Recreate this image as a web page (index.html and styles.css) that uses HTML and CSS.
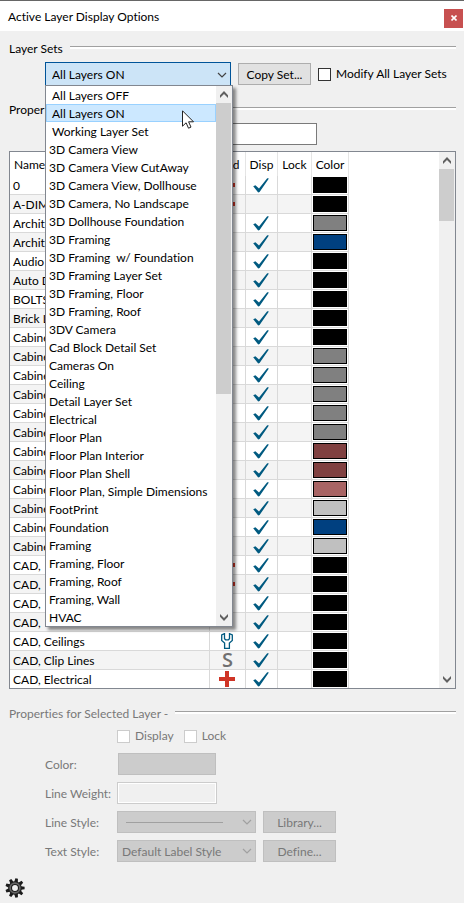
FILE: index.html
```html
<!DOCTYPE html>
<html lang="en">
<head>
<meta charset="utf-8">
<meta name="viewport" content="width=device-width, initial-scale=1">
<title>Active Layer Display Options</title>
<link rel="stylesheet" href="styles.css">
</head>
<body>
<svg class="sprite" aria-hidden="true">
  <symbol id="chevron" viewBox="0 0 10 6"><path d="M1 1l4 4 4-4" fill="none" stroke="currentColor" stroke-width="1.2"/></symbol>
  <symbol id="arrow-up" viewBox="0 0 8 7"><path d="M0 4.2L4 0l4 4.2V7L4 3 0 7z" fill="currentColor"/></symbol>
  <symbol id="arrow-down" viewBox="0 0 8 7"><path d="M0 2.8L4 7l4-4.200V0L4 4 0 0z" fill="currentColor"/></symbol>
  <symbol id="check" viewBox="0 0 16 15"><path d="M.2 8.300L2.400 7.200 6 10.400 14.200.2 15.900.6 6.600 14 5.200 14.600z" fill="#005a80"/></symbol>
  <symbol id="plus" viewBox="0 0 16 16"><path d="M6 0h4v6h6v4h-6v6H6v-6H0V6h6z" fill="#cf3426"/></symbol>
  <symbol id="wrench" viewBox="0 0 12 16"><path d="M3.500.7L.7 2v5.500L3.600 10v5.300h4.800V10l2.900-2.500V2L8.500.7v5L7.400 6.800H4.600L3.500 5.700z" fill="#fff" stroke="#005a80" stroke-width="1.300"/></symbol>
</svg>

<header class="titlebar">
  <h1>Active Layer Display Options</h1>
  <button class="close" type="button" aria-label="Close"><svg viewBox="0 0 6 6"><path d="M.5.5l5 5M5.500.5l-5 5" stroke="#fff" stroke-width="1.600"/></svg></button>
</header>

<main>
  <section>
    <h2 class="heading">Layer Sets</h2>
    <div class="set-row">
      <div class="combo">
        <select class="set-select" aria-label="Layer set"><option>All Layers ON</option></select>
        <svg class="chevron"><use href="#chevron"/></svg>
        <div class="popup">
          <ul role="listbox" aria-label="Layer sets" id="sets"></ul>
          <div class="scroll">
            <button type="button" aria-label="Scroll up"><svg><use href="#arrow-up"/></svg></button>
            <span class="thumb set-thumb"></span>
            <button type="button" aria-label="Scroll down"><svg><use href="#arrow-down"/></svg></button>
          </div>
          <svg class="pointer" viewBox="0 0 12 19"><path d="M.5.8v15.400l3.600-3.400 2.400 5.400 2.500-1.100-2.400-5.300h4.900z" fill="#fff" stroke="#222" /></svg>
        </div>
      </div>
      <button class="btn" type="button">Copy Set...</button>
      <label class="tick"><input type="checkbox">Modify All Layer Sets</label>
    </div>
  </section>

  <section>
    <h2 class="heading">Proper</h2>
    <input class="filter" type="text" aria-label="Filter layers">
    <div class="grid">
      <table>
        <colgroup><col class="c-name"><col class="c-used"><col class="c-disp"><col class="c-lock"><col class="c-color"><col></colgroup>
        <thead><tr><th class="name">Name</th><th class="used">Used</th><th>Disp</th><th>Lock</th><th>Color</th><th class="rest"></th></tr></thead>
        <tbody id="layers"></tbody>
      </table>
      <div class="scroll">
        <button type="button" aria-label="Scroll up"><svg><use href="#arrow-up"/></svg></button>
        <span class="thumb grid-thumb"></span>
        <button type="button" aria-label="Scroll down"><svg><use href="#arrow-down"/></svg></button>
      </div>
    </div>
  </section>

  <section class="selected">
    <h2 class="heading">Properties for Selected Layer -</h2>
    <div class="ticks">
      <label class="tick"><input type="checkbox" disabled>Display</label>
      <label class="tick"><input type="checkbox" disabled>Lock</label>
    </div>
    <div class="fields">
      <label for="color">Color:</label>
      <button class="btn color" id="color" type="button" disabled></button>
      <label for="weight">Line Weight:</label>
      <input class="weight" id="weight" type="text" disabled>
      <label for="line">Line Style:</label>
      <div class="combo">
        <select id="line" disabled></select>
        <span class="line-sample"></span>
        <svg class="chevron"><use href="#chevron"/></svg>
      </div>
      <button class="btn" type="button" disabled>Library...</button>
      <label for="text">Text Style:</label>
      <div class="combo">
        <select id="text" disabled><option>Default Label Style</option></select>
        <svg class="chevron"><use href="#chevron"/></svg>
      </div>
      <button class="btn" type="button" disabled>Define...</button>
    </div>
  </section>
</main>

<footer>
  <button class="gear" type="button" aria-label="Settings">
    <svg viewBox="-10 -10 20 20">
      <g fill="#1c1c1c" id="teeth"></g>
      <circle r="6.300" fill="#666" stroke="#1c1c1c" stroke-width="1.100"/>
      <circle r="3.500" fill="#f0f0f0" stroke="#1c1c1c" stroke-width="1.100"/>
    </svg>
  </button>
</footer>
<script src="script.js"></script>
</body>
</html>
```
FILE: styles.css
```css
* { box-sizing: border-box; }

body {
  margin: 0;
  min-height: 100vh;
  background: #f0f0f0;
  color: #000;
  font: 12px/18px Lato, "Open Sans", sans-serif;
  font-variant-ligatures: none;
}

h1, h2 { margin: 0; font: inherit; }
h1, h2 { font-variant-ligatures: none; }
button, input, select { font: inherit; font-variant-ligatures: none; color: inherit; border-radius: 0; }
ul { margin: 0; padding: 0; list-style: none; }
svg { display: block; }
.sprite { position: absolute; width: 0; height: 0; }

.titlebar {
  display: flex;
  align-items: center;
  justify-content: space-between;
  height: 31px;
  padding: 1px 1px 0 8px;
  border-top: 1px solid #666;
  background: #fff;
}

.close {
  display: grid;
  place-items: center;
  width: 19px;
  height: 19px;
  margin-top: 3px;
  padding: 0;
  border: 0;
  background: #c75050;
}
.close svg { width: 6px; height: 6px; }

main { padding: 9px 8px 0 9px; }

.heading { display: flex; gap: 7px; height: 18px; }
.heading::after {
  content: "";
  flex: 1;
  height: 2px;
  margin-top: 6px;
  border-top: 1px solid #a0a0a0;
  background: #fff;
}

.set-row {
  display: flex;
  align-items: center;
  gap: 7px;
  height: 24px;
  margin: 4px 0 15px 36px;
}

.combo { position: relative; }
.combo select {
  display: block;
  width: 100%;
  height: 22px;
  padding: 2px 20px 0 4px;
  border: 1px solid #bfbfbf;
  background: #ccc;
  appearance: none;
  opacity: 1;
}
.combo .set-select {
  width: 186px;
  height: 24px;
  padding-left: 6px;
  border-color: #005499;
  background: #cce4f7;
}
.chevron {
  position: absolute;
  top: 8px;
  right: 4px;
  width: 10px;
  height: 6px;
  color: #444;
}
.set-select + .chevron { top: 10px; }

.popup {
  position: absolute;
  z-index: 2;
  top: 23px;
  left: 0;
  display: flex;
  width: 188px;
  border: 1px solid #828790;
  background: #fff;
  box-shadow: 3px 3px 3px rgba(0, 0, 0, .45);
}
.popup ul { flex: 1; min-width: 0; }
.popup li { height: 18px; padding-left: 3px; line-height: 20px; white-space: pre; }
.popup .builtin { padding-left: 6px; }
.popup [aria-selected="true"] {
  padding-left: 5px;
  border: 1px solid #99d1ff;
  background: #cce8ff;
  line-height: 18px;
}
.pointer { position: absolute; top: 24px; left: 136px; width: 12px; height: 19px; }

.scroll {
  display: flex;
  flex-direction: column;
  flex-shrink: 0;
  width: 16px;
  padding-right: 1px;
  background: #f0f0f0;
}
.scroll button {
  display: grid;
  place-items: center;
  height: 17px;
  padding: 0;
  border: 0;
  background: none;
  color: #606060;
}
.scroll svg { width: 8px; height: 7px; }
.scroll button:last-child { margin-top: auto; }
.thumb { background: #cdcdcd; }
.set-thumb { height: 291px; }
.grid-thumb { height: 52px; }

.btn {
  width: 73px;
  height: 22px;
  padding: 2px 0 0;
  border: 1px solid #adadad;
  background: #e1e1e1;
}
.btn:disabled { border-color: #bfbfbf; background: #ccc; color: #787878; }

.tick { display: flex; align-items: center; gap: 5px; white-space: nowrap; }
.tick input {
  width: 13px;
  height: 13px;
  margin: 0;
  border: 1px solid #333;
  background: #fff;
  appearance: none;
}
.tick input:disabled { border-color: #ccc; }

.filter {
  display: block;
  width: 200px;
  height: 22px;
  margin: 4px 0 6px 108px;
  border: 1px solid #7a7a7a;
  background: #fff;
}

.grid { display: flex; border: 1px solid #828790; background: #fff; }
table { flex: 1; min-width: 0; table-layout: fixed; border-collapse: separate; border-spacing: 0; }
.c-name { width: 200px; }
.c-used { width: 36px; }
.c-disp { width: 32px; }
.c-lock { width: 34px; }
.c-color { width: 37px; }
th, td {
  height: 19px;
  padding: 0;
  border-right: 1px solid #d9d9d9;
  border-bottom: 1px solid #d9d9d9;
  font-weight: normal;
  line-height: 18px;
  white-space: nowrap;
}
th { height: 24px; padding-top: 2px; border-bottom: 0; border-right-color: #e5e5e5; text-align: center; }
th.name { padding-left: 4px; text-align: left; }
th.used { padding-right: 3px; }
td.name { padding: 2px 0 0 3px; line-height: 16px; text-align: left; }
tbody tr:nth-child(even) td { background: #f4f4f4; }
tbody tr:last-child td { height: 18px; border-bottom: 0; }
tbody tr td.swatch { padding: 1px; background: #fff; }
tbody tr td.rest, th.rest { border: 0; background: #fff; }
.swatch span { display: block; height: 16px; border: 1px solid #000; }
.check { width: 16px; height: 15px; margin-left: 7px; }
.plus { width: 16px; height: 16px; margin-left: 9px; }
.wrench { width: 12px; height: 16px; margin-left: 11px; }
.s { height: 18px; color: #707070; font: 600 20px/18px "Open Sans", sans-serif; text-align: center; }

.selected { margin-top: 16px; color: #787878; }
.ticks { display: flex; gap: 10px; margin: 4px 0 0 108px; }
.fields {
  display: grid;
  grid-template-columns: 72px 139px 73px;
  row-gap: 7px;
  align-items: center;
  margin: 8px 0 0 36px;
}
.fields > label { grid-column: 1; padding-top: 2px; white-space: nowrap; }
.fields .combo + .btn { margin-left: 7px; }
.fields .chevron { color: #a0a0a0; }
.fields .color { width: 98px; margin-left: 1px; }
.weight { width: 100px; height: 22px; border: 1px solid #ccc; background: #f0f0f0; box-shadow: inset 0 0 0 1px #fff; }
.line-sample { position: absolute; top: 11px; left: 9px; right: 33px; height: 1px; background: #a0a0a0; }

footer { padding: 16px 5px 0; }
.gear { display: block; width: 20px; height: 20px; padding: 0; border: 0; background: none; }
```
FILE: script.js
```js
const sets = [
  "All Layers OFF", "All Layers ON", "Working Layer Set", "3D Camera View",
  "3D Camera View CutAway", "3D Camera View, Dollhouse", "3D Camera, No Landscape",
  "3D Dollhouse Foundation", "3D Framing", "3D Framing  w/ Foundation",
  "3D Framing Layer Set", "3D Framing, Floor", "3D Framing, Roof", "3DV Camera",
  "Cad Block Detail Set", "Cameras On", "Ceiling", "Detail Layer Set", "Electrical",
  "Floor Plan", "Floor Plan Interior", "Floor Plan Shell", "Floor Plan, Simple Dimensions",
  "FootPrint", "Foundation", "Framing", "Framing, Floor", "Framing, Roof", "Framing, Wall", "HVAC"
];

document.getElementById("sets").innerHTML = sets.map((name, i) =>
  `<li role="option" aria-selected="${i === 1}"${i < 3 ? ' class="builtin"' : ""}>${name}</li>`
).join("");

const black = "#000000", gray = "#808080", blue = "#004080", silver = "#c0c0c0", brown = "#804040", rose = "#a86464";

// name, colour, used icon, displayed
const layers = [
  ["0", black, "plus"], ["A-DIM", black, "plus", false], ["Archit", gray], ["Archit", blue],
  ["Audio", black], ["Auto D", black], ["BOLTS", black], ["Brick L", black],
  ["Cabine", black], ["Cabine", gray], ["Cabine", gray], ["Cabine", gray], ["Cabine", gray],
  ["Cabine", gray], ["Cabine", brown], ["Cabine", brown], ["Cabine", rose], ["Cabine", silver],
  ["Cabine", blue], ["Cabine", silver],
  ["CAD,", black, "plus"], ["CAD,", black, "plus"], ["CAD,", black], ["CAD,", black],
  ["CAD, Ceilings", black, "wrench"], ["CAD, Clip Lines", black, "s"], ["CAD, Electrical", black, "plus"]
];

const icon = (name) => {
  if (!name) return "";
  if (name === "s") return '<div class="s">S</div>';
  return `<svg class="${name}"><use href="#${name}"/></svg>`;
};

document.getElementById("layers").innerHTML = layers.map(([name, color, used, shown = true]) => `
  <tr><td class="name">${name}</td><td>${icon(used)}</td><td>${shown ? icon("check") : ""}</td><td></td>
  <td class="swatch"><span style="background:${color}"></span></td><td class="rest"></td></tr>`
).join("");

document.getElementById("teeth").innerHTML = Array.from({ length: 9 }, (_, i) =>
  `<path d="M-1.800 -6L-1.300 -9.600H1.300L1.800 -6z" transform="rotate(${i * 40 + 10})"/>`
).join("");
```
